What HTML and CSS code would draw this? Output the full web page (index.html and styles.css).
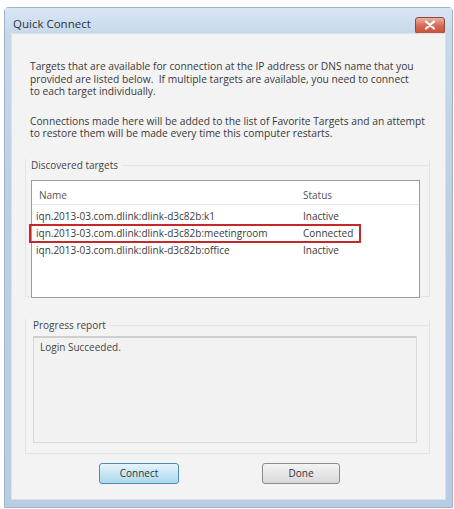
FILE: index.html
```html
<!DOCTYPE html>
<html>
<head>
<meta charset="utf-8">
<link rel="stylesheet" href="styles.css">
</head>
<body>
<div class="window">
  <div class="titlebar">
    <span class="title">Quick Connect</span>
    <span class="close"><svg width="12" height="10" viewBox="0 0 12 10"><path d="M2 1.5 L10 8.5 M10 1.5 L2 8.5" stroke="#fff" stroke-width="2.2" stroke-linecap="round"/></svg></span>
  </div>
  <div class="client">
    <p class="para">Targets that are available for connection at the IP address or DNS name that you<br>provided are listed below.&nbsp; If multiple targets are available, you need to connect<br>to each target individually.</p>
    <p class="para p2">Connections made here will be added to the list of Favorite Targets and an attempt<br>to restore them will be made every time this computer restarts.</p>

    <div class="group g1">
      <div class="glabel">Discovered targets</div>
      <div class="listview">
        <div class="lhead"><span class="c1">Name</span><span class="c2">Status</span></div>
        <div class="row"><span class="c1">iqn.2013-03.com.dlink:dlink-d3c82b:k1</span><span class="c2">Inactive</span></div>
        <div class="row sel"><span class="c1">iqn.2013-03.com.dlink:dlink-d3c82b:meetingroom</span><span class="c2">Connected</span></div>
        <div class="row"><span class="c1">iqn.2013-03.com.dlink:dlink-d3c82b:office</span><span class="c2">Inactive</span></div>
      </div>
    </div>

    <div class="group g2">
      <div class="glabel">Progress report</div>
      <div class="report">Login Succeeded.</div>
    </div>

    <div class="buttons">
      <button class="btn default">Connect</button>
      <button class="btn">Done</button>
    </div>
  </div>
</div>
</body>
</html>
```

FILE: styles.css
```css
html, body {
  margin: 0;
  padding: 0;
  background: #ffffff;
}
body {
  font-family: "Open Sans", "Liberation Sans", sans-serif;
  font-size: 10px;
  color: #3a3a3a;
}
.window {
  margin: 7px 0 0 4px;
  width: 449px;
  height: 501px;
  box-sizing: border-box;
  border: 1px solid #9fb4c9;
  border-radius: 4px 4px 0 0;
  background: linear-gradient(#c9d9ea, #bcd0e4 40%, #b9cde2);
  padding: 0 6px 7px 6px;
  display: flex;
  flex-direction: column;
}
.titlebar {
  height: 25px;
  display: flex;
  align-items: center;
  justify-content: space-between;
  background: linear-gradient(#d9e6f3, #c8d9eb);
  margin: 0 -6px;
  padding: 0 7px 0 8px;
}
.title {
  font-size: 11.5px;
  color: #2a3340;
  padding-top: 6px;
}
.close {
  width: 30px;
  height: 17px;
  box-sizing: border-box;
  border: 1px solid #8a4a3e;
  border-radius: 3px;
  background: linear-gradient(#eab2a3, #d66c57 50%, #c8503b);
  display: flex;
  align-items: center;
  justify-content: center;
  margin-top: 9px;
}
.client {
  flex: 1;
  background: #f3f3f3;
  border: 1px solid #d8e2ec;
  padding: 26px 0 0 0;
  display: flex;
  flex-direction: column;
}
.para {
  margin: 0 0 0 18px;
  line-height: 12.5px;
  font-size: 10.25px;
  white-space: nowrap;
}
.p2 {
  margin-top: 17px;
}
.group {
  margin-left: 13px;
  width: 405px;
  box-sizing: border-box;
  border: 1px solid #e4e4e4;
  border-top: none;
}
.g1 {
  margin-top: 19px;
  height: 138px;
  padding: 0 0 0 5px;
}
.glabel {
  display: flex;
  align-items: center;
  gap: 4px;
  height: 13px;
  color: #444;
}
.glabel::after {
  content: "";
  flex: 1;
  border-top: 1px solid #e4e4e4;
  margin-right: -1px;
}
.g1 .glabel {
  margin-left: -5px;
  padding-left: 5px;
  margin-bottom: 8px;
}
.listview {
  width: 389px;
  height: 118px;
  box-sizing: border-box;
  border: 1px solid #9c9c9c;
  background: #ffffff;
  padding: 6px 0 0 0;
}
.lhead {
  display: flex;
  height: 17px;
  align-items: center;
  border-bottom: 1px solid #e8e8e8;
  color: #555;
  margin-bottom: 3px;
}
.row {
  display: flex;
  height: 17px;
  align-items: center;
}
.c1 {
  width: 271px;
  padding-left: 4px;
  box-sizing: border-box;
}
.lhead .c1 {
  padding-left: 7px;
}
.row.sel {
  outline: 2px solid #c4282b;
  outline-offset: -1px;
  margin-left: -2px;
  padding-left: 2px;
  width: 330px;
  box-sizing: border-box;
}
.g2 {
  margin-top: 22px;
  height: 135px;
  padding: 0 0 0 7px;
}
.g2 .glabel {
  margin-left: -6px;
  padding-left: 6px;
  margin-bottom: 4px;
}
.report {
  width: 384px;
  height: 107px;
  box-sizing: border-box;
  border: 1px solid #dadada;
  border-top: 2px solid #cfcfcf;
  background: #f2f2f2;
  padding: 2px 0 0 6px;
  color: #444;
}
.buttons {
  display: flex;
  margin-top: 9px;
  padding-left: 87px;
  gap: 83px;
}
.btn {
  width: 80px;
  height: 21px;
  box-sizing: border-box;
  font-family: inherit;
  font-size: 10px;
  color: #333;
  border: 1px solid #8c8c8c;
  border-radius: 3px;
  background: linear-gradient(#f4f4f4, #e6e6e6 50%, #d9d9d9);
  padding: 0;
}
.btn.default {
  border-color: #4f8cb0;
  background: linear-gradient(#e6f4fb, #c8e6f5 50%, #aed7ee);
}
.btn + .btn {
  width: 78px;
}
```
